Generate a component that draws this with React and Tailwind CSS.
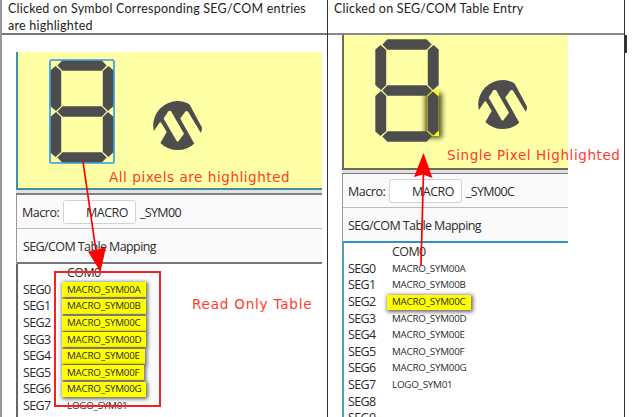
import React from "react";

const UI = "font-['Open_Sans','Noto_Sans',sans-serif] text-[#2b2b2b] whitespace-pre";
const NOTE = "absolute font-['DejaVu_Sans',sans-serif] text-[#ff3a30] whitespace-pre leading-[20px] text-[13.5px]";

const SEGMENTS = [
  "7.3,5.5 12.5,0.3 51.5,0.3 56.7,5.5 51.5,10.8 12.5,10.8",
  "0.3,10.5 5.5,6 11.2,11 11.2,46 6,51 0.3,46",
  "52.8,11 58.5,6 63.7,10.5 63.7,46 58,51 52.8,46",
  "7.3,51.5 12.5,46.2 51.5,46.2 56.7,51.5 51.5,56.8 12.5,56.8",
  "0.3,57 6,52 11.2,57 11.2,92 5.5,97 0.3,92.5",
  "7.3,97.5 12.5,92.2 51.5,92.2 56.7,97.5 51.5,102.7 12.5,102.7",
];
const LOWER_RIGHT = "52.8,57 58,52 63.7,57 63.7,92 58.5,97 52.8,92";

function Digit({ lit }) {
  return (
    <svg width="64" height="103" viewBox="0 0 64 103" className="overflow-visible">
      <defs>
        <filter id="glow" x="-150%" y="-50%" width="400%" height="200%">
          <feGaussianBlur stdDeviation="2.6" />
        </filter>
      </defs>
      {lit && <rect x="50" y="54" width="17" height="45" fill="#45401c" opacity="0.9" filter="url(#glow)" />}
      {lit && <rect x="52.5" y="52" width="11.5" height="45" fill="#ffff00" />}
      {lit && <path d="M52.5 52h5.5l-5.5 5zM52.5 97h5.5l-5.5-5z" fill="#9c9558" />}
      <g fill="#4d4d4d">
        {SEGMENTS.map((p) => (
          <polygon key={p} points={p} />
        ))}
        <polygon points={LOWER_RIGHT} />
      </g>
      {lit && <path d="M52.5 57 58 52 63.5 57M52.5 92 58.5 97 63.5 92" fill="none" stroke="#f5f000" strokeWidth="1" />}
      {!lit && <rect x="0" y="0" width="64" height="103" rx="1.5" fill="none" stroke="#2f97e8" strokeWidth="1.6" />}
    </svg>
  );
}

function Logo() {
  return (
    <svg width="50" height="50" viewBox="0 0 50 50">
      <circle cx="24.7" cy="24.6" r="24.5" fill="#4d4d4d" />
      <g fill="#ffffa5">
        <path d="M15.2 10.6Q16.6 9 18.2 10.6L31 32.7 25.6 39.9Q24.6 41 23.6 39.9L10.6 17.6Z" />
        <path d="M32.4 10.6Q33.8 9 35.2 11L47.6 31.4 50 33V50H45.5L41 42.3 27.2 17.6Z" />
        <path d="M0 31.2 6.3 22Q7.4 20.4 8.5 22.2L13.7 31 7.2 42.3 3 50H0Z" />
        <path d="M35.8 2 50 28.6V0H34Z" />
      </g>
    </svg>
  );
}

function Screen({ lit }) {
  return (
    <div className={"flex items-start bg-[#ffffa5] " + (lit ? "h-[133px] pl-[31px] pt-[4px]" : "h-[136px] pl-[32px] pt-[8px]")}>
      <Digit lit={lit} />
      <div className="ml-[39px] mt-[41px]">
        <Logo />
      </div>
    </div>
  );
}

function MacroBar({ suffix }) {
  return (
    <div className="flex h-[34px] items-center border-b border-[#bdbdbd] bg-[#fafafa] pl-[5px] pt-px">
      <span className={UI + " w-[41px] pt-[2px] text-[12.5px] tracking-[-0.45px]"}>Macro:</span>
      <div className="flex h-[24px] w-[73px] items-center justify-end rounded-[3px] border border-[#d2d2d2] bg-white pr-[7px] pt-[2px]">
        <span className={UI + " text-[12.5px] tracking-[-0.5px]"}>MACRO</span>
      </div>
      <span className={UI + " ml-[4px] pt-[2px] text-[12.5px] tracking-[-0.65px]"}>{suffix}</span>
    </div>
  );
}

function Row({ seg, name, on }) {
  return (
    <div className="flex h-[16.6px] items-center">
      <span className={UI + " w-[39px] text-[12.5px] leading-[16px] tracking-[-0.6px]"}>{seg}</span>
      {name && (
        <div className={"flex h-[15px] items-center px-[5px] " + (on ? "bg-[#ffff00] shadow-[1px_1px_4px_1px_rgba(0,0,0,0.6)]" : "")}>
          <span className={UI + " text-[9.8px] leading-[14px] tracking-[-0.22px]"}>{name}</span>
        </div>
      )}
    </div>
  );
}

const ENTRIES = [
  "MACRO_SYM00A",
  "MACRO_SYM00B",
  "MACRO_SYM00C",
  "MACRO_SYM00D",
  "MACRO_SYM00E",
  "MACRO_SYM00F",
  "MACRO_SYM00G",
  "LOGO_SYM01",
];

function MappingTable({ extra, isOn }) {
  return (
    <div className="flex flex-col">
      <div className={UI + " h-[16.6px] pl-[44px] text-[12.5px] leading-[16.6px] tracking-[-0.6px]"}>COM0</div>
      {ENTRIES.map((name, i) => (
        <Row key={name} seg={"SEG" + i} name={name} on={isOn(i)} />
      ))}
      {extra.map((s) => (
        <Row key={s} seg={s} />
      ))}
    </div>
  );
}

export default function App() {
  return (
    <div className="relative flex h-[417px] w-[639px] overflow-hidden bg-white">
      <div className="flex w-[328px] shrink-0 flex-col border-l-2 border-r border-l-[#999999] border-r-[#333333]">
        <div className="h-[35px] shrink-0 border-b-2 border-[#777777] pl-[6px] font-['Lato',sans-serif] text-[12.5px] leading-[17px] text-[#222222]">
          <div className="whitespace-pre tracking-[0.24px]">Clicked on Symbol Corresponding SEG/COM entries</div>
          <div className="whitespace-pre tracking-[0.24px]">are highlighted</div>
        </div>
        <div className="ml-[14px] mt-[17px] w-[306px]">
          <div className="border-b-2 border-l-2 border-[#4290a0]">
            <Screen lit={false} />
          </div>
          <div className="h-[5px] border-b-2 border-[#828282] bg-[#e2e2e6]" />
          <div className="border-l border-[#999999]">
            <MacroBar suffix="_SYM00" />
            <div className="flex h-[35px] items-center border-b-2 border-[#777777] bg-[#fafafa] pl-[6px] pt-[4px]">
              <span className={UI + " text-[12.5px] tracking-[-0.6px]"}>SEG/COM Table Mapping</span>
            </div>
          </div>
          <div className="h-[160px] border-l-2 border-[#666666] pl-[5px] pt-[1px]">
            <MappingTable extra={[]} isOn={(i) => i < 7} />
          </div>
        </div>
      </div>

      <div className="flex w-[297px] shrink-0 flex-col border-r border-[#333333]">
        <div className="h-[35px] shrink-0 border-b-2 border-[#8a8a85] pl-[6px] font-['Lato',sans-serif] text-[12.5px] leading-[17px] text-[#222222]">
          <div className="whitespace-pre tracking-[0.22px]">Clicked on SEG/COM Table Entry</div>
        </div>
        <div className="ml-[14px] w-[226px]">
          <div className="border-b-2 border-l-2 border-[#6b6b58]">
            <Screen lit />
          </div>
          <div className="h-[4px] border-b border-[#777777] bg-[#e2e2e6]" />
          <div className="border-l border-[#999999]">
            <MacroBar suffix="_SYM00C" />
            <div className="flex h-[35px] items-center border-b-2 border-[#2b94bd] bg-[#fafafa] pl-[5px] pt-[3px]">
              <span className={UI + " text-[12.5px] tracking-[-0.6px]"}>SEG/COM Table Mapping</span>
            </div>
          </div>
          <div className="h-[180px] border-l-2 border-[#4aa0bd] pl-[4px] pt-px">
            <MappingTable extra={["SEG8", "SEG9"]} isOn={(i) => i === 2} />
          </div>
        </div>
      </div>
      <div className="mt-[35px] h-[18px] w-[2px] bg-[#333333]" />

      <div className="absolute left-[54px] top-[271px] h-[136px] w-[107px] border-2 border-[#f52020]" />
      <svg className="absolute left-0 top-0" width="639" height="417" viewBox="0 0 639 417">
        <g fill="#ff0000" stroke="#ff0000">
          <path d="M83 161.5 96 251" strokeWidth="1.7" />
          <path d="M88 251.5 96.5 250 106 247 100.5 272Z" stroke="none" />
          <path d="M421 266 423.5 172" strokeWidth="1.7" />
          <path d="M423.5 153 414 177 423 174.5 432.5 178Z" stroke="none" />
        </g>
      </svg>
      <div className={NOTE + " left-[109px] top-[167px] tracking-[0.56px]"}>All pixels are highlighted</div>
      <div className={NOTE + " left-[192px] top-[294px] tracking-[0.8px]"}>Read Only Table</div>
      <div className={NOTE + " left-[447px] top-[145px] tracking-[0.6px]"}>Single Pixel Highlighted</div>
    </div>
  );
}
